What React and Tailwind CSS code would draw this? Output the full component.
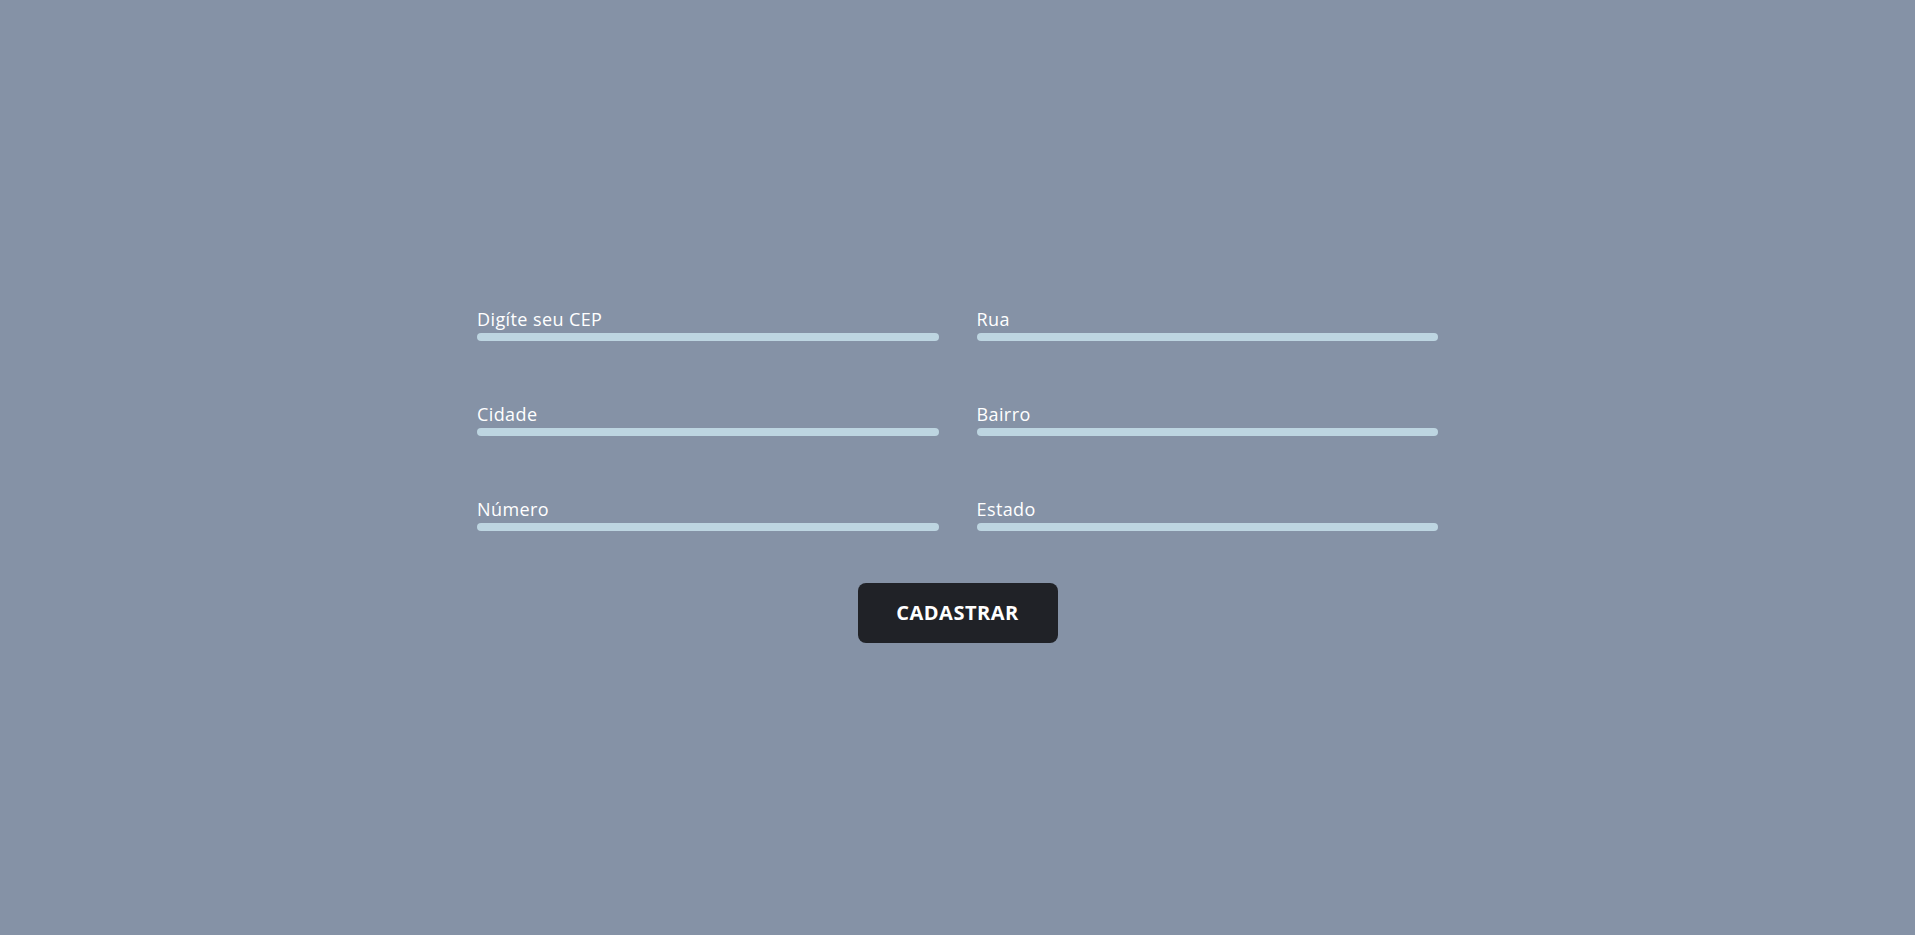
const fields = [
  { id: 'cep', label: 'Digíte seu CEP' },
  { id: 'rua', label: 'Rua' },
  { id: 'cidade', label: 'Cidade' },
  { id: 'bairro', label: 'Bairro' },
  { id: 'numero', label: 'Número' },
  { id: 'estado', label: 'Estado' },
];

const Field = ({ id, label }) => (
  <label htmlFor={id} className="flex flex-col">
    <span className="text-[18px] leading-[22px] tracking-[0.4px] text-white">{label}</span>
    <input
      id={id}
      type="text"
      className="mt-[3px] h-2 w-full rounded-full bg-[#bdd5e1] outline-none"
    />
  </label>
);

export default function App() {
  return (
    <div
      className="min-h-screen w-full bg-[#8592a6] pt-[308px]"
      style={{ fontFamily: '"Open Sans", "Liberation Sans", sans-serif' }}
    >
      <form className="mx-auto flex w-[961px] flex-col items-center">
        <div className="grid w-full grid-cols-2 gap-x-[38px] gap-y-[62px]">
          {fields.map((f) => (
            <Field key={f.id} {...f} />
          ))}
        </div>

        <button
          type="button"
          className="mt-[52px] h-[60px] w-[200px] rounded-lg bg-[#202227] text-[20px] font-bold tracking-wide text-white"
        >
          CADASTRAR
        </button>
      </form>
    </div>
  );
}
